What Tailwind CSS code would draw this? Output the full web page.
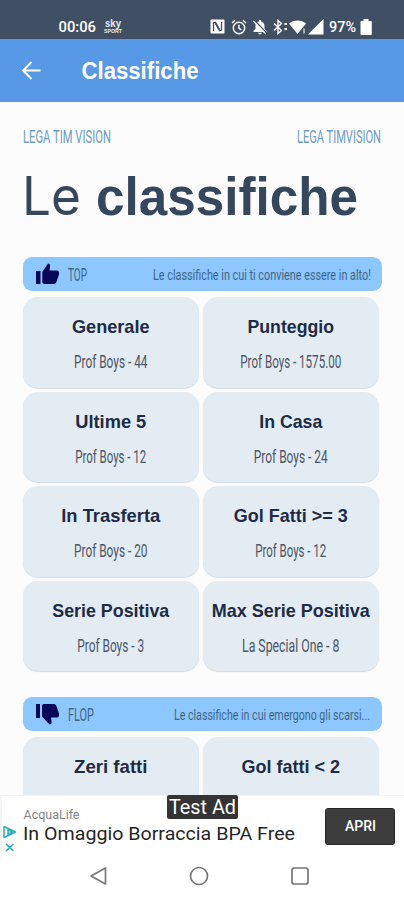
<!DOCTYPE html>
<html lang="it">
<head>
    <meta charset="UTF-8">
    <meta name="viewport" content="width=device-width, initial-scale=1.0">
    <title>Classifiche</title>
    <script src="https://cdn.jsdelivr.net/npm/@tailwindcss/browser@4"></script>
</head>
<body class="bg-[#fcfcfc] font-['Liberation_Sans',sans-serif]">
    <div class="relative flex flex-col w-[404px] h-[900px] overflow-hidden">

        <!-- Status bar -->
        <div class="flex items-end h-[39px] shrink-0 bg-[#414f65] pl-[58px] pr-[32px] pb-1">
            <svg class="overflow-visible h-4 w-[38px] fill-white" font-family="Roboto, sans-serif" font-weight="500" font-size="15"><text x="0.500" y="13" textLength="37.500" lengthAdjust="spacingAndGlyphs">00:06</text></svg>
            <svg class="overflow-visible ml-2 h-[17px] w-[18px] fill-[#e8ebef]" font-weight="700"><text x="1" y="8.500" font-size="11" textLength="16" lengthAdjust="spacingAndGlyphs">sky</text><text x="0" y="15" font-size="6" textLength="18" lengthAdjust="spacingAndGlyphs">SPORT</text></svg>
            <div class="ml-auto flex items-center h-[17px]">
                <!-- NFC -->
                <svg class="w-[15px] h-[15px]" viewBox="0 0 15 15"><rect x=".5" y=".5" width="14" height="14" rx="1" fill="#fff"/><path d="M3.500 12V4l2-.8 4.300 7.600M11.500 3v8l-2 .8L5.200 4.200" fill="none" stroke="#414f65" stroke-width="1.300"/></svg>
                <!-- Sveglia -->
                <svg class="ml-[6px] w-4 h-4" viewBox="0 0 16 16" fill="none" stroke="#fff" stroke-width="1.400"><circle cx="8" cy="9" r="5.700"/><path d="M8 5.800V9.300l2.400 1.500M1 4l3-2.700M15 4l-3-2.700"/></svg>
                <!-- Campanella spenta -->
                <svg class="ml-[5px] w-4 h-4" viewBox="0 0 16 16"><path d="M1.500 13V11.700l2-1.700V7c0-2.500 1.500-4 3.500-4.500V1h2v1.500c2 .5 3.500 2 3.500 4.500v3l2 1.700V13zM6.300 13.700h3.400c0 1-.7 1.700-1.700 1.700s-1.700-.7-1.700-1.700z" fill="#fff"/><path d="M2.300 1.300l12.500 13" stroke="#414f65" stroke-width="1.400"/><path d="M1.300 2l12.500 13" stroke="#fff" stroke-width="1.300"/></svg>
                <!-- Bluetooth -->
                <svg class="ml-1 w-[16px] h-4" viewBox="0 0 16 16" fill="none" stroke="#fff" stroke-width="1.400"><path d="M2 4.500l7.500 7-3.500 3V1.500l3.500 3-7.500 7"/><path d="M12.500 5h2.500M12.500 10h2.500" stroke-width="2"/></svg>
                <!-- Wifi -->
                <svg class="ml-px w-[17px] h-4" viewBox="0 0 17 16"><path d="M0 4.500C4.500.5 12.500.5 17 4.500L8.500 15z" fill="#fff"/><path d="M15 9.500v5" stroke="#c7ccd4" stroke-width="1.500"/></svg>
                <!-- Rete -->
                <svg class="ml-0.5 w-4 h-4" viewBox="0 0 16 16"><path d="M15.500 0v15.500H0z" fill="#fff"/></svg>
                <svg class="overflow-visible ml-[5px] h-4 w-[27px] fill-white" font-family="Roboto, sans-serif" font-weight="500" font-size="14"><text x="0" y="13" textLength="27" lengthAdjust="spacingAndGlyphs">97%</text></svg>
                <!-- Batteria -->
                <svg class="ml-1 w-3 h-4" viewBox="0 0 12 16"><path d="M3.500 0h5v2H11q.8 0 .8.800v12.400q0 .8-.8.800H1.300q-.8 0-.8-.8V2.800Q.5 2 1.300 2h2.200z" fill="#fff"/></svg>
            </div>
        </div>

        <!-- Barra del titolo -->
        <header class="flex items-center h-[63px] shrink-0 bg-[#5799e6] pl-[22px]">
            <svg class="w-[19px] h-[19px]" viewBox="0 0 19 19" fill="none" stroke="#fff" stroke-width="2"><path d="M18.500 9.500H1.500M9.500 1L1.200 9.500l8.300 8.500"/></svg>
            <svg class="overflow-visible ml-[40px] h-7 w-[118px] fill-white" font-weight="700" font-size="23"><text x="0.500" y="22" textLength="117" lengthAdjust="spacingAndGlyphs">Classifiche</text></svg>
        </header>

        <main class="flex flex-col pl-[23px] pr-[22px] pt-[25px]">
            <div class="flex justify-between fill-[#6a9cc8]">
                <svg class="overflow-visible h-6 w-[90px]" font-family="Roboto, sans-serif" font-size="18"><text x="0" y="16" textLength="88" lengthAdjust="spacingAndGlyphs">LEGA TIM VISION</text></svg>
                <svg class="overflow-visible h-6 w-[88px]" font-family="Roboto, sans-serif" font-size="18"><text x="3" y="16" textLength="84" lengthAdjust="spacingAndGlyphs">LEGA TIMVISION</text></svg>
            </div>
            <svg class="overflow-visible mt-[16px] h-[60px] w-[340px] fill-[#34475d]">
                <text x="-1" y="47.500" font-family="Inter, sans-serif" font-weight="400" font-size="53" textLength="59" lengthAdjust="spacingAndGlyphs">Le</text>
                <text x="73" y="47.500" font-weight="700" font-size="54" textLength="262" lengthAdjust="spacingAndGlyphs">classifiche</text>
            </svg>

            <!-- TOP -->
            <div class="mt-[30px] flex items-center h-[34px] rounded-[9px] bg-[#8cc8ff] pl-[13px] pr-[8px]">
                <svg class="w-[23px] h-[22px]" viewBox="0 0 23 22" fill="#07075a"><path d="M0 8h4.500v13H0zM6.300 9L12 .5q2 0 2.200 2L13.500 7.500H21q2 0 2 2v2l-2.700 7.800q-.6 1.700-2.300 1.700H8.500q-2.200 0-2.200-2.200z"/></svg>
                <svg class="overflow-visible ml-[9px] h-6 w-[22px] fill-[#3f6585]" font-family="Roboto, sans-serif" font-size="17.500"><text x="0" y="18.500" textLength="19" lengthAdjust="spacingAndGlyphs">TOP</text></svg>
                <svg class="overflow-visible ml-auto h-6 w-[221px] fill-[#3f6585]" font-family="Roboto, sans-serif" font-size="15"><text x="0" y="17.500" textLength="218" lengthAdjust="spacingAndGlyphs">Le classifiche in cui ti conviene essere in alto!</text></svg>
            </div>
            <div id="top" class="mt-[6px] grid grid-cols-[175.500px_175.500px] gap-x-[4.500px] gap-y-[4px]"></div>

            <!-- FLOP -->
            <div class="mt-[26px] flex items-center h-[34px] rounded-[9px] bg-[#8cc8ff] pl-[13px] pr-[8px]">
                <svg class="w-[23px] h-[22px]" viewBox="0 0 23 22" fill="#07075a"><path d="M0 1h4v14H0zM6 3q0-2 2-2h10q1.700 0 2.300 1.700L23 10.500v2q0 2-2 2h-6l.7 5q-.2 2-2.200 2L6 13.500z"/></svg>
                <svg class="overflow-visible ml-[9px] h-6 w-[28px] fill-[#3f6585]" font-family="Roboto, sans-serif" font-size="17.500"><text x="0" y="18.500" textLength="26" lengthAdjust="spacingAndGlyphs">FLOP</text></svg>
                <svg class="overflow-visible ml-auto h-6 w-[200px] fill-[#3f6585]" font-family="Roboto, sans-serif" font-size="15"><text x="0" y="17.500" textLength="196" lengthAdjust="spacingAndGlyphs">Le classifiche in cui emergono gli scarsi...</text></svg>
            </div>
            <div id="flop" class="mt-[6px] grid grid-cols-[175.500px_175.500px] gap-x-[4.500px] gap-y-[4px]"></div>
        </main>

        <!-- Banner e tasti di navigazione, sopra la lista -->
        <div class="absolute inset-x-0 bottom-0 h-[105px] bg-white">
            <div class="relative flex h-[57px] border-t border-l-2 border-[#f3f4f4] bg-white">
                <svg class="absolute left-0 top-[28px] w-[16px] h-[28px]" viewBox="0 0 16 28" fill="none" stroke="#27b0bd" stroke-width="1.500"><path d="M2 2.500v11L13.500 8zM6 5.500v5l4-2.500z" stroke-linejoin="round"/><path d="M4 20l7.500 7M11.500 20L4 27" stroke-width="1.700"/></svg>
                <svg class="overflow-visible ml-[21px] h-[56px] w-[275px]" font-family="Roboto, sans-serif">
                    <text x="0.500" y="23" font-size="13" fill="#858585" textLength="56" lengthAdjust="spacingAndGlyphs">AcquaLife</text>
                    <text x="0" y="44" font-size="18" fill="#262626" textLength="272" lengthAdjust="spacingAndGlyphs">In Omaggio Borraccia BPA Free</text>
                </svg>
                <div class="absolute left-[165px] top-[-1px] flex h-[24px] w-[71px] justify-center rounded-[2px] bg-[#343434]">
                    <svg class="overflow-visible h-6 w-[67px] fill-white" font-family="Roboto, sans-serif" font-size="19.500"><text x="0" y="19" textLength="67" lengthAdjust="spacingAndGlyphs">Test Ad</text></svg>
                </div>
                <div class="ml-[27px] mt-[12px] flex h-[37px] w-[70px] items-center justify-center rounded-[3px] border border-[#262626] bg-[#3d3d3d]">
                    <svg class="overflow-visible h-5 w-[31px] fill-white" font-family="Roboto, sans-serif" font-weight="500" font-size="14"><text x="0" y="14" textLength="31" lengthAdjust="spacingAndGlyphs">APRI</text></svg>
                </div>
            </div>
            <div class="flex items-center h-[48px] pl-[89px] gap-[82px]">
                <svg class="w-[18px] h-[20px]" viewBox="0 0 18 20" fill="none" stroke="#777" stroke-width="1.700" stroke-linejoin="round"><path d="M16.500 2v16L2 10z"/></svg>
                <svg class="w-[20px] h-[20px]" viewBox="0 0 20 20" fill="none" stroke="#777" stroke-width="1.700"><circle cx="10" cy="10" r="8.500"/></svg>
                <svg class="w-[18px] h-[20px]" viewBox="0 0 18 20" fill="none" stroke="#777" stroke-width="1.700"><rect x="1" y="2" width="16" height="16" rx="2"/></svg>
            </div>
        </div>
    </div>

    <script>
        // titolo, larghezza titolo, squadra, larghezza squadra
        const classificheTop = [
            ['Generale', 77.5, 'Prof Boys - 44', 73.5],
            ['Punteggio', 86.5, 'Prof Boys - 1575.00', 101],
            ['Ultime 5', 71, 'Prof Boys - 12', 71],
            ['In Casa', 63, 'Prof Boys - 24', 74],
            ['In Trasferta', 99, 'Prof Boys - 20', 73.5],
            ['Gol Fatti &gt;= 3', 114, 'Prof Boys - 12', 71],
            ['Serie Positiva', 117, 'Prof Boys - 3', 67],
            ['Max Serie Positiva', 158, 'La Special One - 8', 97.5]
        ];
        // la squadra qui resta sotto il banner
        const classificheFlop = [
            ['Zeri fatti', 73.5, '', 0],
            ['Gol fatti &lt; 2', 98.5, '', 0]
        ];

        function card([titolo, wt, squadra, ws]) {
            return `
                <div class="h-[90.600px] rounded-[15px] bg-[#e3ebf3] shadow-[0_1px_1px_#d5dbe0]">
                    <svg class="overflow-visible h-full w-full" text-anchor="middle">
                        <text x="50%" y="36" class="fill-[#1d2b45]" font-weight="700" font-size="18.500" textLength="${wt}" lengthAdjust="spacingAndGlyphs">${titolo}</text>
                        ${squadra && `<text x="50%" y="70.500" class="fill-[#4b5665]" font-family="Roboto, sans-serif" font-size="18" textLength="${ws}" lengthAdjust="spacingAndGlyphs">${squadra}</text>`}
                    </svg>
                </div>`;
        }

        document.getElementById('top').innerHTML = classificheTop.map(card).join('');
        document.getElementById('flop').innerHTML = classificheFlop.map(card).join('');
    </script>
</body>
</html>
